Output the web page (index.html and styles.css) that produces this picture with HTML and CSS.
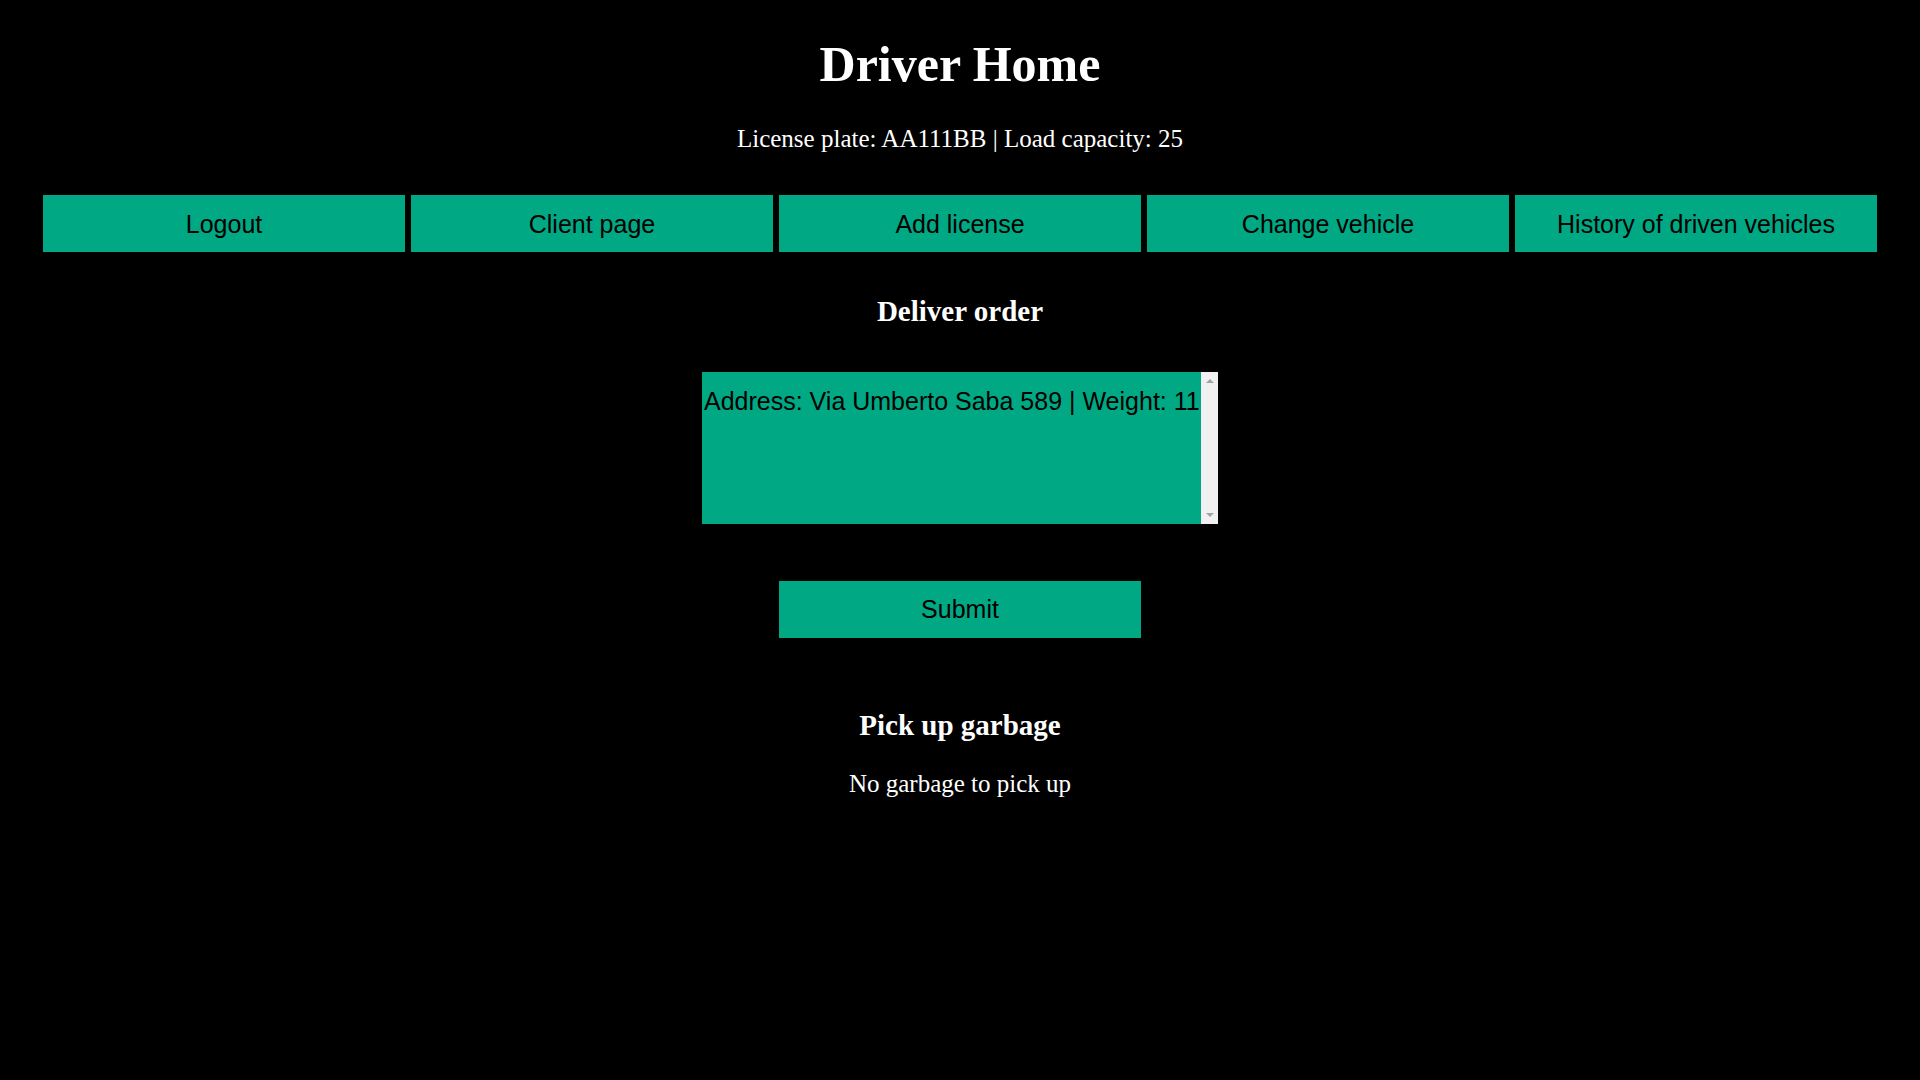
FILE: index.html
```html
<!DOCTYPE html>
<html lang="en">
<head>
<meta charset="utf-8">
<title>Driver Home</title>
<link rel="stylesheet" href="styles.css">
</head>
<body>
<div class="page">
  <h1 class="title">Driver Home</h1>
  <p class="subtitle">License plate: AA111BB | Load capacity: 25</p>
  <nav class="nav">
    <button class="btn">Logout</button>
    <button class="btn">Client page</button>
    <button class="btn">Add license</button>
    <button class="btn">Change vehicle</button>
    <button class="btn">History of driven vehicles</button>
  </nav>
  <h2 class="section-title deliver">Deliver order</h2>
  <form class="order-form">
    <div class="order-field">
      <textarea class="order-box" readonly>Address: Via Umberto Saba 589 | Weight: 11</textarea>
      <div class="scrollbar">
        <span class="arrow up"></span>
        <span class="arrow down"></span>
      </div>
    </div>
    <button type="button" class="btn submit">Submit</button>
  </form>
  <h2 class="section-title pickup">Pick up garbage</h2>
  <p class="note">No garbage to pick up</p>
</div>
</body>
</html>
```
FILE: styles.css
```css
html, body {
  margin: 0;
  padding: 0;
  background: #000;
}
.page {
  padding: 0 43px;
  display: flex;
  flex-direction: column;
  align-items: center;
  color: #fff;
  font-family: "Liberation Serif", "Times New Roman", serif;
}
.title {
  font-size: 50px;
  line-height: 1.2;
  font-weight: bold;
  margin: 34px 0 0;
}
.subtitle {
  font-size: 25px;
  line-height: 1.2;
  margin: 30px 0 0;
}
.nav {
  margin-top: 41px;
  width: 100%;
  display: grid;
  grid-template-columns: repeat(5, 1fr);
  gap: 6px;
}
.btn {
  font-family: "Liberation Sans", Arial, sans-serif;
  font-size: 25px;
  line-height: 1.2;
  height: 57px;
  padding: 0;
  border: none;
  background: #00a884;
  color: #000;
}
.section-title {
  font-size: 29px;
  line-height: 1.2;
  font-weight: bold;
  margin: 0;
}
.deliver {
  margin-top: 42px;
}
.order-form {
  display: flex;
  flex-direction: column;
  align-items: center;
  margin-top: 43px;
}
.order-field {
  display: flex;
  width: 516px;
  height: 152px;
}
.order-box {
  box-sizing: border-box;
  flex: 1;
  height: 100%;
  padding: 15px 0 0 2px;
  margin: 0;
  border: none;
  outline: none;
  resize: none;
  overflow: hidden;
  white-space: pre;
  background: #00a884;
  color: #000;
  font-family: "Liberation Sans", Arial, sans-serif;
  font-size: 25px;
}
.scrollbar {
  width: 17px;
  background: #f1f1f1;
  display: flex;
  flex-direction: column;
  justify-content: space-between;
  align-items: center;
  padding: 7px 0;
  box-sizing: border-box;
}
.arrow {
  width: 0;
  height: 0;
  border-left: 4px solid transparent;
  border-right: 4px solid transparent;
}
.arrow.up {
  border-bottom: 4px solid #a3a3a3;
}
.arrow.down {
  border-top: 4px solid #a3a3a3;
}
.submit {
  width: 362px;
  margin-top: 57px;
}
.pickup {
  margin-top: 70px;
}
.note {
  font-size: 25px;
  line-height: 1.2;
  margin: 26px 0 0;
}
```
